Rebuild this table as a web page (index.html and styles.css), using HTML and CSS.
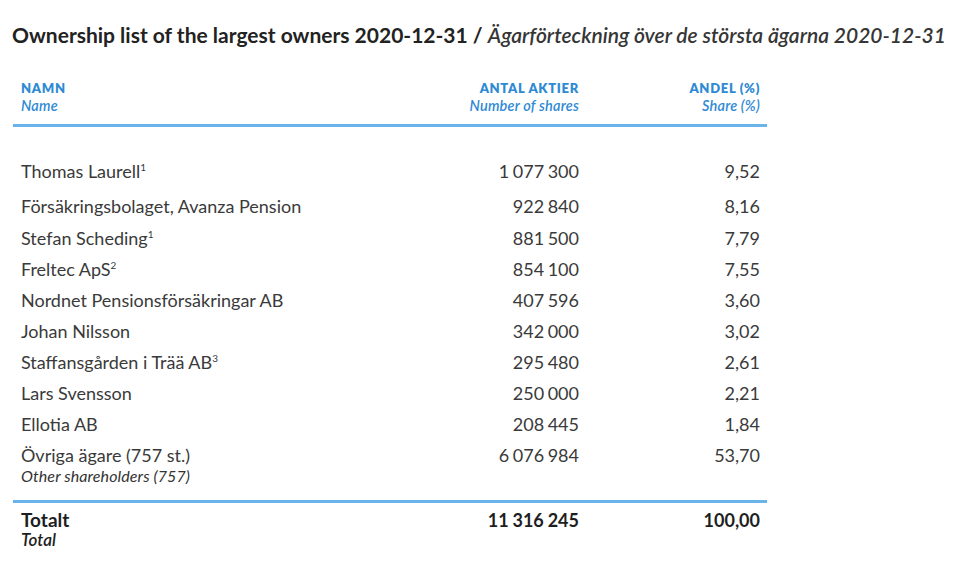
FILE: index.html
```html
<!DOCTYPE html>
<html lang="sv">
<head>
<meta charset="utf-8">
<link rel="stylesheet" href="styles.css">
</head>
<body>
<div class="page">
  <h1 class="title">Ownership list of the largest owners 2020-12-31 / <em>Ägarförteckning över de största ägarna 2020-12-31</em></h1>
  <div class="table">
    <div class="row head">
      <div class="c-name"><b>NAMN</b><i>Name</i></div>
      <div class="c-num"><b>ANTAL AKTIER</b><i>Number of shares</i></div>
      <div class="c-pct"><b>ANDEL (%)</b><i>Share (%)</i></div>
    </div>
    <div class="body">
      <div class="row item r1"><div class="c-name">Thomas Laurell<sup>1</sup></div><div class="c-num">1 077 300</div><div class="c-pct">9,52</div></div>
      <div class="row item r2"><div class="c-name">Försäkringsbolaget, Avanza Pension</div><div class="c-num">922 840</div><div class="c-pct">8,16</div></div>
      <div class="row item"><div class="c-name">Stefan Scheding<sup>1</sup></div><div class="c-num">881 500</div><div class="c-pct">7,79</div></div>
      <div class="row item"><div class="c-name">Freltec ApS<sup>2</sup></div><div class="c-num">854 100</div><div class="c-pct">7,55</div></div>
      <div class="row item"><div class="c-name">Nordnet Pensionsförsäkringar AB</div><div class="c-num">407 596</div><div class="c-pct">3,60</div></div>
      <div class="row item"><div class="c-name">Johan Nilsson</div><div class="c-num">342 000</div><div class="c-pct">3,02</div></div>
      <div class="row item"><div class="c-name">Staffansgården i Trää AB<sup>3</sup></div><div class="c-num">295 480</div><div class="c-pct">2,61</div></div>
      <div class="row item"><div class="c-name">Lars Svensson</div><div class="c-num">250 000</div><div class="c-pct">2,21</div></div>
      <div class="row item"><div class="c-name">Ellotia AB</div><div class="c-num">208 445</div><div class="c-pct">1,84</div></div>
      <div class="row item other"><div class="c-name">Övriga ägare (757 st.)<i>Other shareholders (757)</i></div><div class="c-num">6 076 984</div><div class="c-pct">53,70</div></div>
    </div>
    <div class="row total">
      <div class="c-name"><b>Totalt</b><i>Total</i></div>
      <div class="c-num"><b>11 316 245</b></div>
      <div class="c-pct"><b>100,00</b></div>
    </div>
  </div>
</div>
</body>
</html>
```
FILE: styles.css
```css
html, body {
  margin: 0;
  padding: 0;
  background: #ffffff;
}
body {
  font-family: Lato, "Open Sans", "Liberation Sans", sans-serif;
  color: #333333;
}
.page {
  padding: 20px 0 0 12px;
}
.title {
  margin: 0;
  font-size: 21px;
  line-height: 30px;
  font-weight: 700;
  color: #222222;
  white-space: nowrap;
}
.title em {
  font-weight: 600;
  font-style: italic;
  color: #363636;
}
.table {
  width: 754px;
  margin-top: 29px;
  margin-left: 1px;
}
.row {
  display: grid;
  grid-template-columns: 1fr 160px 181px;
  padding: 0 7px 0 8px;
}
.c-num, .c-pct {
  text-align: right;
}
.head {
  border-bottom: 3px solid #6ab4ea;
  padding-bottom: 9px;
  line-height: 18px;
  color: #2f8ad4;
}
.head b, .head i {
  display: block;
}
.head b {
  font-size: 13px;
  font-weight: 800;
  letter-spacing: 0.7px;
}
.head i {
  font-size: 14.5px;
  font-weight: 600;
  letter-spacing: 0.2px;
}
.body {
  padding-top: 27px;
  padding-bottom: 15px;
  border-bottom: 3px solid #6ab4ea;
}
.item {
  font-size: 18px;
  line-height: 31px;
  color: #3a3a3a;
}
.item .c-num {
  word-spacing: -1px;
}
.item.r1 { line-height: 35px; }
.item.r2 { line-height: 34px; }
.item sup {
  font-size: 10px;
  line-height: 0;
  vertical-align: 7px;
}
.other .c-name i {
  display: block;
  font-size: 16px;
  line-height: 18px;
  margin-top: -4px;
  letter-spacing: 0.1px;
  color: #333;
}
.total {
  padding-top: 6px;
  font-size: 18px;
  line-height: 22px;
  color: #1e1e1e;
}
.total b {
  display: block;
  font-weight: 700;
}
.total .c-num b {
  word-spacing: -0.5px;
}
.total .c-name b {
  font-size: 19px;
}
.total i {
  display: block;
  font-size: 17px;
  font-weight: 600;
  line-height: 18px;
}
```
